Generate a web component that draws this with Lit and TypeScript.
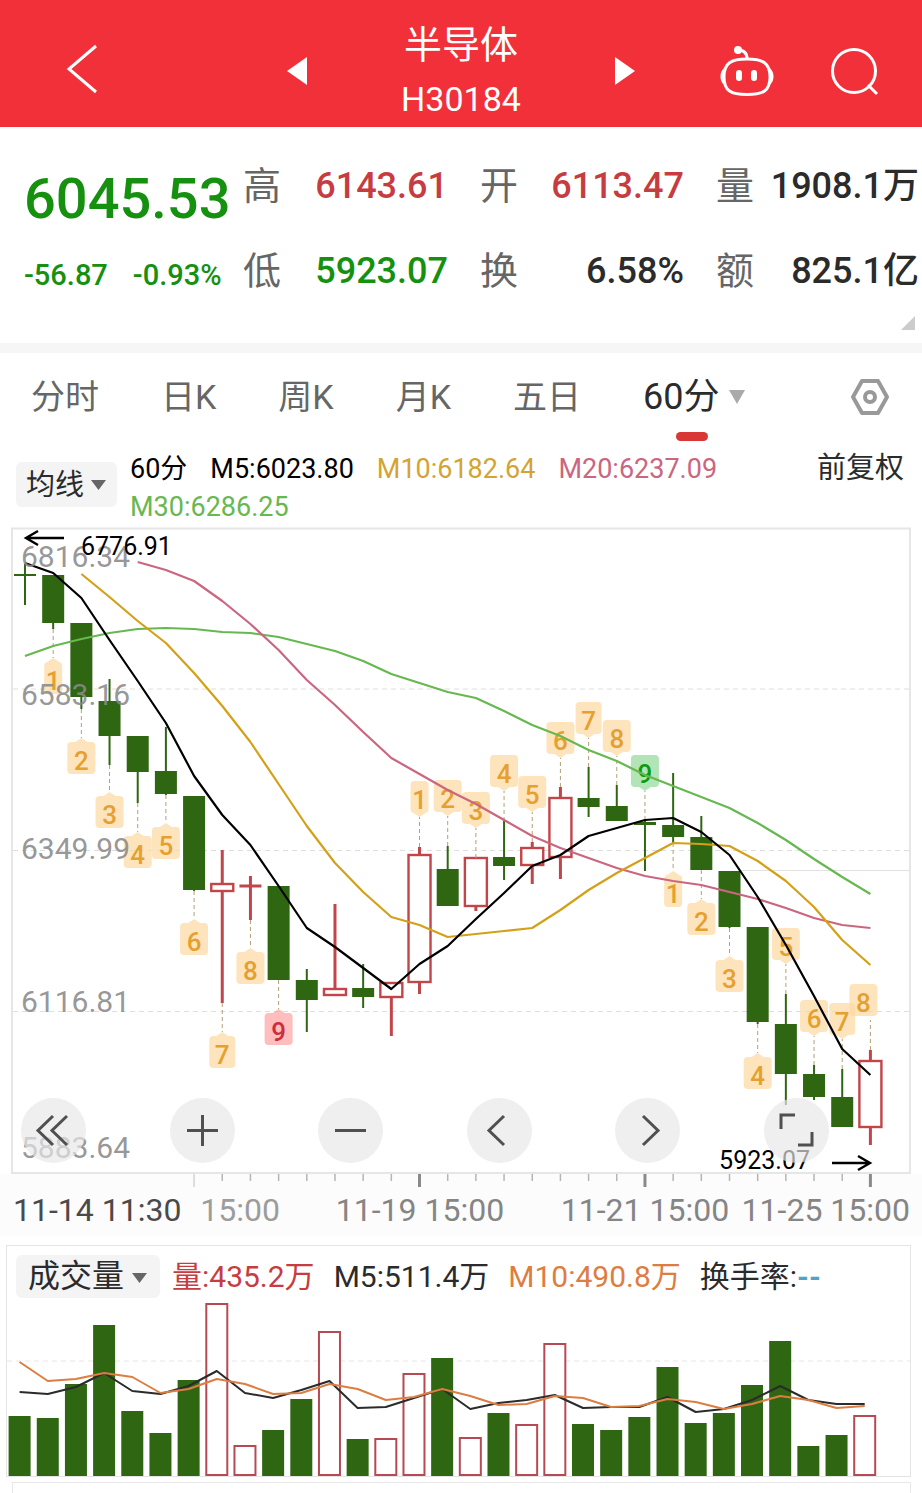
import { LitElement, html, svg, css } from "lit";
import { customElement, state } from "lit/decorators.js";
import { classMap } from "lit/directives/class-map.js";

type Kind = "up" | "down";
// [high, open/close top, open/close bottom, low, direction]
type Candle = [number, number, number, number, Kind];

const STEP = 28.18;
const FIRST = 25;
const cx = (i: number) => FIRST + STEP * i;

const CANDLES: Candle[] = [
  [564, 575, 576, 605, "down"],
  [575, 575, 623, 629, "down"],
  [623, 623, 697, 709, "down"],
  [679, 701, 736, 765, "down"],
  [736, 736, 772, 803, "down"],
  [727, 771, 794, 795, "down"],
  [796, 796, 890, 891, "down"],
  [850, 884, 891, 1003, "up"],
  [876, 886, 886, 920, "up"],
  [886, 886, 980, 980, "down"],
  [969, 980, 1000, 1032, "down"],
  [904, 989, 995, 995, "up"],
  [964, 988, 997, 1008, "down"],
  [983, 983, 997, 1036, "up"],
  [847, 855, 982, 994, "up"],
  [846, 869, 906, 906, "down"],
  [858, 858, 906, 911, "up"],
  [821, 857, 866, 880, "down"],
  [842, 848, 865, 884, "up"],
  [787, 798, 857, 879, "up"],
  [767, 798, 807, 817, "down"],
  [785, 806, 821, 821, "down"],
  [820, 822, 825, 871, "down"],
  [773, 825, 837, 843, "down"],
  [816, 837, 870, 870, "down"],
  [871, 871, 927, 928, "down"],
  [927, 927, 1022, 1024, "down"],
  [994, 1024, 1074, 1105, "down"],
  [1065, 1074, 1097, 1100, "down"],
  [1069, 1097, 1127, 1127, "down"],
  [1050, 1061, 1127, 1145, "up"],
];

const MA5 = [563, 573, 598, 640, 681, 723, 776, 815, 845, 886, 928, 947, 968, 989, 964, 946, 919, 893, 866, 855, 836, 828, 820, 818, 832, 855, 897, 945, 996, 1049, 1075];
const MA10 = [574, 597, 621, 643, 673, 706, 742, 784, 826, 863, 892, 917, 925, 937, 934, 931, 928, 910, 890, 873, 858, 843, 844, 846, 861, 881, 907, 940, 965];
const MA20 = [562, 570, 581, 601, 624, 650, 680, 705, 732, 758, 774, 790, 804, 820, 836, 848, 858, 868, 876, 881, 885, 892, 899, 908, 918, 925, 928];
const MA30 = [656, 646, 639, 633, 629, 628, 629, 632, 633, 637, 644, 651, 661, 674, 683, 692, 698, 711, 725, 736, 750, 761, 775, 786, 797, 808, 823, 840, 859, 877, 894];

// [candle index, digit, tip y, side, tone, shift of the plate]
type Mark = [number, string, number, "below" | "above", string?, number?];
const MARKS: Mark[] = [
  [1, "1", 658, "below"],
  [2, "2", 738, "below"],
  [3, "3", 792, "below"],
  [4, "4", 832, "below"],
  [5, "5", 823, "below"],
  [6, "6", 919, "below"],
  [7, "7", 1032, "below"],
  [8, "8", 948, "below"],
  [9, "9", 1009, "below", "red"],
  [14, "1", 817, "above"],
  [15, "2", 816, "above"],
  [16, "3", 828, "above"],
  [17, "4", 791, "above"],
  [18, "5", 812, "above"],
  [19, "6", 758, "above"],
  [20, "7", 738, "above"],
  [21, "8", 756, "above"],
  [22, "9", 791, "above", "green"],
  [23, "1", 871, "below"],
  [24, "2", 899, "below"],
  [25, "3", 956, "below"],
  [26, "4", 1053, "below"],
  [27, "5", 964, "above"],
  [28, "6", 1036, "above"],
  [29, "7", 1039, "above"],
  [30, "8", 1020, "above", "", -7],
];

const PRICES: [string, number][] = [
  ["6816.34", 567], ["6583.16", 705], ["6349.99", 859], ["6116.81", 1012], ["5883.64", 1158],
];

const VOLUMES = [1416, 1418, 1384, 1325, 1411, 1433, 1380, 1303, 1445, 1430, 1399, 1331, 1439, 1438, 1373, 1358, 1437, 1413, 1424, 1343, 1424, 1430, 1417, 1367, 1423, 1413, 1385, 1341, 1446, 1435, 1415];
const VOLUME_UP = new Set([7, 8, 11, 13, 14, 16, 18, 19, 30]);
const VM5 = [1392, 1394, 1387, 1373, 1391, 1394, 1386, 1371, 1393, 1398, 1390, 1381, 1408, 1407, 1398, 1389, 1409, 1403, 1400, 1395, 1408, 1407, 1407, 1397, 1412, 1409, 1400, 1386, 1400, 1404, 1404];
const VM10 = [1362, 1381, 1379, 1373, 1377, 1393, 1389, 1379, 1384, 1394, 1393, 1384, 1389, 1400, 1397, 1389, 1396, 1405, 1404, 1396, 1398, 1407, 1406, 1399, 1402, 1409, 1404, 1396, 1400, 1408, 1406];

const line = (ys: number[], from = 0, x = cx) =>
  ys.map((y, k) => `${x(k + from).toFixed(1)},${y}`).join(" ");

const FONT = css`"Roboto", "Noto Sans CJK SC", sans-serif`;

@customElement("price-chart")
export class PriceChart extends LitElement {
  static styles = css`
    :host { display: block; position: relative; font-family: ${FONT}; }
    svg { display: block; width: 100%; height: auto; }
    .frame { fill: none; stroke: #e6e6e6; stroke-width: 2; }
    .axis { fill: #fcfcfc; }
    .grid { stroke: #dedede; stroke-width: 1; stroke-dasharray: 5 4; }
    .rule { stroke: #e2e2e2; stroke-width: 1; }
    .down { fill: #2f6612; stroke: none; }
    .down-wick { stroke: #2f6612; stroke-width: 2; }
    .up { fill: #fff; stroke: #c2454a; stroke-width: 2.4; }
    .up-wick { stroke: #c2454a; stroke-width: 3; }
    .ma { fill: none; stroke-width: 2.2; stroke-linejoin: round; }
    .ma5 { stroke: #000; }
    .ma10 { stroke: #d3a017; }
    .ma20 { stroke: #cb6680; }
    .ma30 { stroke: #67b850; }
    .lead { stroke: #b3a078; stroke-width: 1; stroke-dasharray: 4 3; }
    .plate { fill: #fdd9a0; fill-opacity: .7; }
    .plate.red { fill: #f99; fill-opacity: .65; }
    .plate.green { fill: #7fd287; fill-opacity: .6; }
    .digit { font-size: 26px; font-weight: 500; text-anchor: middle; fill: #e5a02f; }
    .digit.red { fill: #cb2f3b; }
    .digit.green { fill: #0c9a12; }
    .price { font-size: 30px; fill: #8a8a8a; fill-opacity: .9; }
    .extreme { font-size: 25px; fill: #000; }
    .arrow { fill: none; stroke: #000; stroke-width: 2.4; }
    .tick { stroke: #b5b5b5; stroke-width: 1.5; }
    .tick.long { stroke: #8a8a8a; stroke-width: 3; }
    .tick.faint { stroke: #ddd; stroke-width: 2; }
    .date { font-size: 32px; fill: #858585; }
    .date.first { fill: #4a4a4a; }
    .date.dim { fill: #9c9c9c; }
    .end { text-anchor: end; }
    .mid { text-anchor: middle; }
    .controls {
      position: absolute; left: 21px; right: 93px; bottom: 73px;
      display: flex; justify-content: space-between;
    }
    .controls button {
      width: 65px; height: 65px; padding: 0; border: 0; border-radius: 50%;
      background: rgba(231, 231, 231, .68); cursor: pointer;
    }
    .controls svg { width: 65px; height: 65px; fill: none; stroke: #505050; stroke-width: 3; }
  `;

  private candle([high, top, bottom, low, kind]: Candle, i: number) {
    const x = cx(i);
    const flat = bottom - top < 2;
    if (kind === "down" || flat) {
      return svg`
        <line class="${kind}-wick" x1=${x} x2=${x} y1=${high} y2=${low}></line>
        ${flat
          ? svg`<line class="${kind}-wick" x1=${x - 11} x2=${x + 11} y1=${top} y2=${top}></line>`
          : svg`<rect class="down" x=${x - 11} y=${top} width="22" height=${bottom - top}></rect>`}`;
    }
    return svg`
      <line class="up-wick" x1=${x} x2=${x} y1=${high} y2=${top}></line>
      <line class="up-wick" x1=${x} x2=${x} y1=${bottom} y2=${low}></line>
      <rect class="up" x=${x - 11} y=${top} width="22" height=${bottom - top}></rect>`;
  }

  private mark([i, digit, tip, side, tone = "", shift = 0]: Mark) {
    const x = cx(i);
    const below = side === "below";
    const half = digit === "1" ? 9 : digit === "7" ? 13 : 14;
    const left = x + shift - half;
    const y = below ? tip + 4 : tip - 36;
    const from = below ? CANDLES[i][3] : CANDLES[i][0];
    return svg`
      <line class="lead" x1=${x} x2=${x} y1=${from} y2=${tip}></line>
      <path class="plate ${tone}" d="M${left + 4} ${y}
        ${below ? `H${x - 6} L${x} ${tip} L${x + 6} ${y}` : ""}
        H${left + half * 2 - 4} q4 0 4 4 v24 q0 4 -4 4
        ${below || shift ? "" : `H${x + 6} L${x} ${tip} L${x - 6} ${y + 32}`}
        H${left + 4} q-4 0 -4 -4 v-24 q0 -4 4 -4 z"></path>
      <text class="digit ${tone}" x=${x + shift} y=${below ? tip + 32 : tip - 8}>${digit}</text>`;
  }

  private tick(i: number) {
    const long = i % 8 === 6;
    return svg`<line class="tick ${long ? (i === 6 ? "faint" : "long") : ""}"
      x1=${cx(i)} x2=${cx(i)} y1="1174" y2=${long ? 1187 : 1181}></line>`;
  }

  render() {
    const ticks = Array.from({ length: 25 }, (_, k) => k + 6);
    const icons: [string, string][] = [
      ["最早", "M32 18 L17 32.500 L32 47 M46 18 L31 32.500 L46 47"],
      ["放大", "M17 32.500 H48 M32.500 17 V48"],
      ["缩小", "M17 32.500 H48"],
      ["向左", "M37 18 L22 32.500 L37 47"],
      ["向右", "M28 18 L43 32.500 L28 47"],
      ["全屏", "M17 31 V17 H31 M34 47 H48 V34"],
    ];
    return html`
      <svg viewBox="0 524 922 712" role="img" aria-label="60分 K线">
        <rect class="axis" x="0" y="1174" width="922" height="62"></rect>
        <rect class="frame" x="12" y="528.5" width="898" height="644.5"></rect>
        ${[689, 850.5, 1011.5].map((y) => svg`<line class="grid" x1="13" x2="909" y1=${y} y2=${y}></line>`)}
        <line class="rule" x1="740" x2="910" y1="870.5" y2="870.5"></line>
        ${CANDLES.map((c, i) => this.candle(c, i))}
        ${MARKS.map((m) => this.mark(m))}
        <polyline class="ma ma30" points=${line(MA30)}></polyline>
        <polyline class="ma ma20" points=${line(MA20, 4)}></polyline>
        <polyline class="ma ma10" points=${line(MA10, 2)}></polyline>
        <polyline class="ma ma5" points=${line(MA5)}></polyline>
        ${PRICES.map(([t, y]) => svg`<text class="price" x="21" y=${y}>${t}</text>`)}
        <text class="extreme" x="81" y="555">6776.91</text>
        <path class="arrow" d="M64 538 H26 M38 531 L26 538 L38 545"></path>
        <text class="extreme end" x="810" y="1169">5923.07</text>
        <path class="arrow" d="M832 1163 H870 M858 1156 L870 1163 L858 1170"></path>
        ${ticks.map((i) => this.tick(i))}
        <text class="date first" x="13" y="1221">11-14 11:30</text>
        <text class="date dim end" x="280" y="1221">15:00</text>
        <text class="date mid" x="420" y="1221">11-19 15:00</text>
        <text class="date mid" x="645" y="1221">11-21 15:00</text>
        <text class="date end" x="910" y="1221">11-25 15:00</text>
      </svg>
      <div class="controls">
        ${icons.map(([name, d]) => html`
          <button aria-label=${name}><svg viewBox="0 0 65 65"><path d=${d}></path></svg></button>`)}
      </div>`;
  }
}

@customElement("volume-chart")
export class VolumeChart extends LitElement {
  static styles = css`
    :host { display: block; }
    svg { display: block; width: 100%; height: auto; }
    .down { fill: #2f6612; }
    .up { fill: #fff; stroke: #b54a55; stroke-width: 2; }
    .grid { stroke: #e6e6e6; stroke-dasharray: 5 4; }
    .m5, .m10 { fill: none; stroke-width: 2; stroke-linejoin: round; }
    .m5 { stroke: #2b2b2b; }
    .m10 { stroke: #dc7d42; }
  `;

  render() {
    const x = (i: number) => 19.6 + 28.17 * i;
    return html`
      <svg viewBox="7 1299 903 177" role="img" aria-label="成交量">
        <line class="grid" x1="7" x2="910" y1="1361" y2="1361"></line>
        ${VOLUMES.map((top, i) => VOLUME_UP.has(i)
          ? svg`<rect class="up" x=${x(i) - 10.5} y=${top + 1} width="21" height=${1475 - top - 1}></rect>`
          : svg`<rect class="down" x=${x(i) - 11} y=${top} width="22" height=${1476 - top}></rect>`)}
        <polyline class="m5" points=${line(VM5, 0, x)}></polyline>
        <polyline class="m10" points=${line(VM10, 0, x)}></polyline>
      </svg>`;
  }
}

@customElement("app-root")
export class AppRoot extends LitElement {
  static styles = css`
    :host {
      display: block; overflow: hidden; background: #fff; color: #2b2b2b;
      font-family: ${FONT};
    }
    * { box-sizing: border-box; }
    button, select { font: inherit; color: inherit; border: 0; padding: 0; margin: 0; background: none; cursor: pointer; }
    svg { display: block; }

    header {
      display: grid; grid-template-columns: 1fr 348px 1fr; align-items: center;
      height: 127px; background: #f13039; color: #fff;
    }
    .back { margin-left: 66px; justify-self: start; }
    .switcher { display: flex; align-items: center; justify-content: space-between; }
    .switcher button, .tools { padding-top: 14px; }
    .back { padding-top: 11px; }
    .names { text-align: center; padding-top: 14px; }
    .names h1 { margin: 0; font-size: 38px; line-height: 56px; font-weight: 400; }
    .names p { margin: 0; font-size: 34px; line-height: 52px; }
    .tools { display: flex; gap: 56px; justify-content: flex-end; padding-right: 42px; }
    .line { fill: none; stroke: #fff; stroke-width: 3; }
    .solid { fill: #fff; }

    .quote {
      position: relative; display: grid;
      grid-template-columns: 219px 237fr 236fr 203fr;
      padding: 17px 3px 30px 24px; height: 216px;
    }
    .last { grid-row: 1 / 3; color: #15900f; }
    .last strong { display: block; font-size: 56px; line-height: 74px; padding-top: 18px; font-weight: 500; }
    .last div { display: flex; gap: 25px; font-size: 29px; line-height: 36px; padding-top: 21px; font-weight: 500; }
    .cell { display: flex; justify-content: space-between; font-size: 36px; line-height: 84px; margin-right: 32px; white-space: nowrap; }
    .cell.edge { margin-right: 0; }
    .cell dt { font-size: 38px; color: #666; }
    .cell dd { margin: 0; font-weight: 500; }
    dl { display: contents; }
    .r { color: #c73c40; }
    .g { color: #15900f; }
    .corner { position: absolute; right: 7px; bottom: 13px; width: 14px; height: 14px; fill: #ccc; }

    .band { height: 10px; background: #f6f6f6; }

    nav { display: flex; align-items: center; gap: 62px; height: 88px; padding: 0 33px 0 31px; font-size: 34px; color: #666; }
    nav button { position: relative; line-height: 88px; white-space: nowrap; }
    nav .on { color: #2b2b2b; display: flex; align-items: center; gap: 9px; font-size: 36px; }
    nav .on::after {
      content: ""; position: absolute; left: 50%; bottom: 0; width: 32px; height: 9px;
      margin-left: -18px; border-radius: 5px; background: #d93636;
    }
    .gear { margin-left: auto; }
    .gear svg { fill: none; stroke: #999; stroke-width: 4; }
    .caret { fill: #aaa; }

    .pick { position: relative; display: block; flex: none; border-radius: 6px; background: #f4f4f4; }
    .pick select { appearance: none; display: block; width: 100%; height: 100%; padding-left: 10px; outline: none; }
    .pick svg { position: absolute; top: 17px; right: 11px; fill: #666; pointer-events: none; }

    .legend { display: flex; align-items: flex-start; height: 83px; padding: 9px 18px 0 16px; }
    .legend .pick { width: 101px; height: 45px; margin-top: 12px; font-size: 29px; }
    .averages { display: flex; flex-wrap: wrap; gap: 0 23px; margin-left: 13px; flex: 1; font-size: 27px; line-height: 38px; color: #000; }
    .adjust { font-size: 29px; line-height: 36px; white-space: nowrap; }
    .c10 { color: #d3a432; }
    .c20 { color: #cb6680; }
    .c30 { color: #67b850; }

    .volume { margin: 9px 11px 0 6px; border: 1px solid #e4e4e4; }
    .vhead { display: flex; align-items: center; gap: 19px; height: 53px; padding: 9px 0 1px 9px; font-size: 30px; line-height: 43px; white-space: nowrap; }
    .vhead .pick { width: 144px; height: 43px; margin-right: -7px; font-size: 32px; }
    .vhead .pick select { padding-left: 12px; }
    .vhead .pick svg { right: 13px; }
    .vhead .vm10 { color: #dd7d42; }
    .vhead i { font-style: normal; color: #4aa5c6; font-weight: 700; }
    .next { height: 11px; margin: 5px 11px 0 12px; border: 1px solid #e8e8e8; border-bottom: 0; }
  `;

  @state() private period = "60分";

  private caret() {
    return html`<svg class="caret" width="16" height="16" viewBox="0 0 16 16"><path d="M0 1 H16 L8 15 Z"></path></svg>`;
  }

  private cell(label: string, value: string, tone = "", edge = false) {
    return html`<div class=${classMap({ cell: true, edge })}><dt>${label}</dt><dd class=${tone}>${value}</dd></div>`;
  }

  render() {
    return html`
      <header>
        <button class="back" aria-label="返回">
          <svg width="32" height="50" viewBox="66 44 32 50"><path class="line" d="M96 46 L69 69 L96 92"></path></svg>
        </button>
        <div class="switcher">
          <button aria-label="上一个"><svg width="20" height="28" viewBox="0 0 20 28"><path class="solid" d="M0 14 L20 0 V28 Z"></path></svg></button>
          <div class="names"><h1>半导体</h1><p>H30184</p></div>
          <button aria-label="下一个"><svg width="20" height="28" viewBox="0 0 20 28"><path class="solid" d="M20 14 L0 0 V28 Z"></path></svg></button>
        </div>
        <div class="tools">
          <button aria-label="助手">
            <svg width="54" height="52" viewBox="720 44 54 52">
              <path class="line" d="M747 58 C763 58 770 62 770 76 C770 90 763 93.500 747 93.500 C731 93.500 724 90 724 76 C724 62 731 58 747 58 Z"></path>
              <path class="solid" d="M725 67 C719 69 719 82 725 84 Z M769 67 C775 69 775 82 769 84 Z"></path>
              <path class="line" d="M738 49 C744 49 747 52 747 58"></path>
              <circle class="solid" cx="738" cy="49" r="4"></circle>
              <rect class="solid" x="736" y="69" width="6" height="11" rx="3"></rect>
              <rect class="solid" x="751" y="69" width="6" height="11" rx="3"></rect>
            </svg>
          </button>
          <button aria-label="搜索">
            <svg width="50" height="50" viewBox="830 45 50 50">
              <circle class="line" cx="854" cy="70" r="21.5"></circle>
              <path class="line" d="M868 84 L877 93"></path>
            </svg>
          </button>
        </div>
      </header>

      <section class="quote">
        <div class="last">
          <strong>6045.53</strong>
          <div><span>-56.87</span><span>-0.93%</span></div>
        </div>
        <dl>
          ${this.cell("高", "6143.61", "r")}
          ${this.cell("开", "6113.47", "r")}
          ${this.cell("量", "1908.1万", "", true)}
          ${this.cell("低", "5923.07", "g")}
          ${this.cell("换", "6.58%")}
          ${this.cell("额", "825.1亿", "", true)}
        </dl>
        <svg class="corner" viewBox="0 0 14 14"><path d="M14 0 V14 H0 Z"></path></svg>
      </section>
      <div class="band"></div>

      <nav>
        ${["分时", "日K", "周K", "月K", "五日", "60分"].map((t) => html`
          <button class=${classMap({ on: t === this.period })} @click=${() => (this.period = t)}>
            ${t}${t === "60分" ? this.caret() : ""}
          </button>`)}
        <button class="gear" aria-label="设置">
          <svg width="38" height="38" viewBox="0 0 38 38">
            <path stroke-linejoin="round" d="M11 3 H27 L36 19 L27 35 H11 L2 19 Z"></path>
            <circle cx="19" cy="19" r="5"></circle>
          </svg>
        </button>
      </nav>

      <section class="legend">
        <label class="pick">
          <select aria-label="主图指标"><option>均线</option></select>
          <svg width="15" height="12" viewBox="0 0 15 12"><path d="M0 1 H15 L7.500 11 Z"></path></svg>
        </label>
        <div class="averages">
          <span>60分</span><span>M5:6023.80</span><span class="c10">M10:6182.64</span>
          <span class="c20">M20:6237.09</span><span class="c30">M30:6286.25</span>
        </div>
        <span class="adjust">前复权</span>
      </section>

      <price-chart></price-chart>

      <section class="volume">
        <div class="vhead">
          <label class="pick">
            <select aria-label="副图指标"><option>成交量</option></select>
            <svg width="15" height="12" viewBox="0 0 15 12"><path d="M0 1 H15 L7.500 11 Z"></path></svg>
          </label>
          <span class="r">量:435.2万</span><span>M5:511.4万</span>
          <span class="vm10">M10:490.8万</span><span>换手率:<i>--</i></span>
        </div>
        <volume-chart></volume-chart>
      </section>
      <div class="next"></div>
    `;
  }
}
